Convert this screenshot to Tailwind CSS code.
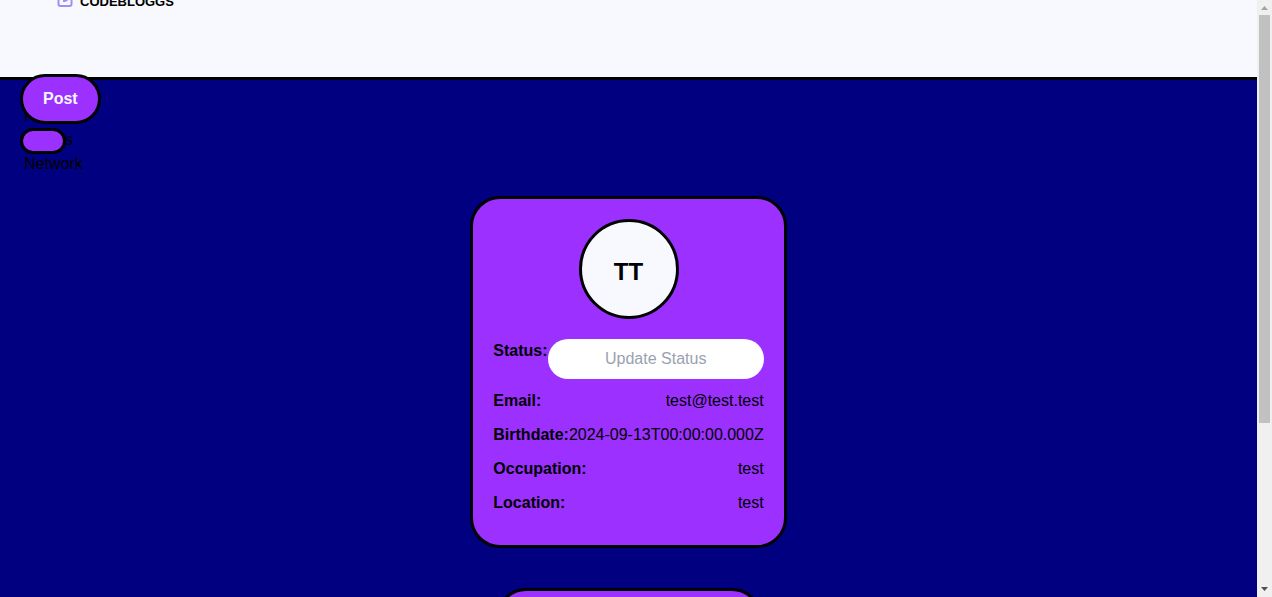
<!DOCTYPE html>
<html lang="en">
<head>
<meta charset="utf-8">
<title>CodeBloggs</title>
<script src="https://cdn.jsdelivr.net/npm/@tailwindcss/browser@4"></script>
</head>
<body class="flex h-screen overflow-hidden bg-[#000080] font-['Liberation_Sans',Arial,sans-serif] text-base text-black">
  <div class="relative h-full min-w-0 flex-1 overflow-hidden">
    <header class="h-20 overflow-hidden border-b-3 border-black bg-[#f8f8ff]">
      <a href="#" class="-mt-4 ml-14 flex h-6 items-end gap-1.5">
        <svg class="size-[18px]" viewBox="0 0 18 18" fill="none" aria-hidden="true">
          <rect x="2.500" y="1" width="13" height="15" rx="2" stroke="#9a90f5" stroke-width="2"/>
          <path d="M7 5h3a3 3 0 0 1 2 5q-1 2-5 2z" fill="#9a90f5"/>
        </svg>
        <span class="text-[13px] leading-3 font-bold">CODEBLOGGS</span>
      </a>
    </header>
    <nav class="mt-6 ml-6">
      <ul>
        <li><a href="#">Home</a></li>
        <li><a href="#">Bloggs</a></li>
        <li><a href="#">Network</a></li>
      </ul>
    </nav>
    <div class="absolute top-[74px] left-5 flex flex-col items-start gap-1">
      <button class="rounded-[30px] border-3 border-black bg-[#9b30ff] px-5 py-2.5 font-bold text-[#f8f8ff]">Post</button>
      <button aria-label="Menu" class="rounded-[30px] border-3 border-black bg-[#9b30ff] px-5 py-2.5"></button>
    </div>
    <main class="mt-5 flex flex-col items-center gap-10">
      <section class="rounded-[30px] border-3 border-black bg-[#9b30ff] p-5">
        <div class="mx-auto mb-5 flex size-[100px] items-center justify-center rounded-full border-3 border-black bg-[#f8f8ff] pt-1.5 text-2xl font-bold">TT</div>
        <div class="mb-2.5 flex justify-between">
          <label for="status" class="font-bold">Status:</label>
          <input id="status" type="text" placeholder="Update Status" class="h-10 w-[216px] rounded-[20px] bg-white px-2.5 text-center placeholder:text-gray-400">
        </div>
        <div class="mb-2.5 flex justify-between"><b>Email:</b><span>test@test.test</span></div>
        <div class="mb-2.5 flex justify-between"><b>Birthdate:</b><span>2024-09-13T00:00:00.000Z</span></div>
        <div class="mb-2.5 flex justify-between"><b>Occupation:</b><span>test</span></div>
        <div class="mb-2.5 flex justify-between"><b>Location:</b><span>test</span></div>
      </section>
      <section class="h-40 w-[266px] rounded-[30px] border-3 border-black bg-[#9b30ff]"></section>
    </main>
  </div>
  <div class="flex w-[15px] shrink-0 flex-col items-center bg-[#f0f0f0]" aria-hidden="true">
    <svg class="h-[15px] w-[15px] shrink-0" viewBox="0 0 15 15"><path d="M4 10L7.500 6L11 10z" fill="#a3a3a3"/></svg>
    <div class="min-h-0 w-full flex-1 px-0.5"><div class="h-[72%] w-full bg-[#c1c1c1]"></div></div>
    <svg class="h-[15px] w-[15px] shrink-0" viewBox="0 0 15 15"><path d="M4 5L7.500 9L11 5z" fill="#505050"/></svg>
  </div>
</body>
</html>
